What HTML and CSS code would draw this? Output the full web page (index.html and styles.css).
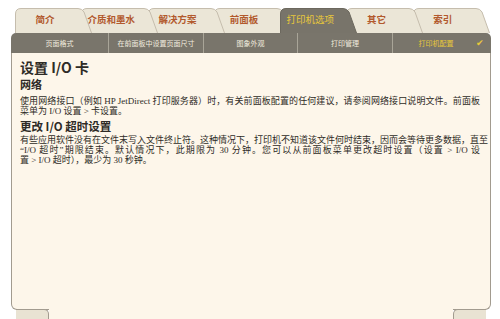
FILE: index.html
```html
<!DOCTYPE html>
<html lang="zh-CN">
<head>
<meta charset="utf-8">
<title>设置 I/O 卡</title>
<link rel="stylesheet" href="styles.css">
</head>
<body>
<div class="page">
  <nav class="tabs">
    <div class="tab z7"><svg class="tab-bg" viewBox="0 0 77 25"><path d="M0.5 25 V6 Q0.5 0.5 6 0.5 H63 Q67 0.5 69 4 L76.5 25"/></svg><span>简介</span></div>
    <div class="tab z6"><svg class="tab-bg" viewBox="0 0 77 25"><path d="M0.5 25 V6 Q0.5 0.5 6 0.5 H63 Q67 0.5 69 4 L76.5 25"/></svg><span>介质和墨水</span></div>
    <div class="tab z5"><svg class="tab-bg" viewBox="0 0 77 25"><path d="M0.5 25 V6 Q0.5 0.5 6 0.5 H63 Q67 0.5 69 4 L76.5 25"/></svg><span>解决方案</span></div>
    <div class="tab z4"><svg class="tab-bg" viewBox="0 0 77 25"><path d="M0.5 25 V6 Q0.5 0.5 6 0.5 H63 Q67 0.5 69 4 L76.5 25"/></svg><span>前面板</span></div>
    <div class="tab active"><svg class="tab-bg" viewBox="0 0 77 25"><path d="M0.5 25 V6 Q0.5 0.5 6 0.5 H63 Q67 0.5 69 4 L76.5 25"/></svg><span>打印机选项</span></div>
    <div class="tab z2"><svg class="tab-bg" viewBox="0 0 77 25"><path d="M0.5 25 V6 Q0.5 0.5 6 0.5 H63 Q67 0.5 69 4 L76.5 25"/></svg><span>其它</span></div>
    <div class="tab z1"><svg class="tab-bg" viewBox="0 0 77 25"><path d="M0.5 25 V6 Q0.5 0.5 6 0.5 H63 Q67 0.5 69 4 L76.5 25"/></svg><span>索引</span></div>
  </nav>
  <div class="subbar">
    <div class="sub">页面格式</div>
    <div class="sub">在前面板中设置页面尺寸</div>
    <div class="sub">图象外观</div>
    <div class="sub">打印管理</div>
    <div class="sub current"><span class="sub-label">打印机配置</span><span class="check">✔</span></div>
  </div>
  <main class="content">
    <h1 class="title">设置 I/O 卡</h1>
    <h2 class="subtitle">网络</h2>
    <p class="para">
      <span class="line">使用网络接口（例如 HP JetDirect 打印服务器）时，有关前面板配置的任何建议，请参阅网络接口说明文件。前面板</span>
      <span class="line last">菜单为 I/O 设置 &gt; 卡设置。</span>
    </p>
    <h2 class="subtitle big">更改 I/O 超时设置</h2>
    <p class="para second">
      <span class="line">有些应用软件没有在文件末写入文件终止符。这种情况下，打印机不知道该文件何时结束，因而会等待更多数据，直至</span>
      <span class="line">“I/O 超时”期限结束。默认情况下，此期限为 30 分钟。您可以从前面板菜单更改超时设置（设置 &gt; I/O 设</span>
      <span class="line last">置 &gt; I/O 超时），最少为 30 秒钟。</span>
    </p>
  </main>
  <div class="footer">
    <div class="cap cap-left"></div>
    <div class="mid"></div>
    <div class="cap cap-right"></div>
  </div>
</div>
</body>
</html>
```
FILE: styles.css
```css
html, body {
  margin: 0;
  padding: 0;
  background: #ffffff;
}
body {
  font-family: "Noto Sans CJK SC", "Noto Sans", sans-serif;
  width: 500px;
  height: 319px;
  overflow: hidden;
}
.tabs {
  display: flex;
  padding: 8px 0 0 15px;
  height: 25px;
}
.tab {
  position: relative;
  flex: none;
  width: 66.3px;
  height: 25px;
}
.tab-bg {
  position: absolute;
  left: 0;
  top: 0;
  width: 77px;
  height: 25px;
}
.tab-bg path {
  fill: #ebe6d7;
  stroke: #c5bdad;
  stroke-width: 1;
}
.tab span {
  position: relative;
  display: block;
  width: 60px;
  text-align: center;
  line-height: 23px;
  font-size: 9.5px;
  font-weight: bold;
  color: #b2592d;
  white-space: nowrap;
}
.z7 { z-index: 7; }
.z6 { z-index: 6; }
.z5 { z-index: 5; }
.z4 { z-index: 4; }
.z2 { z-index: 2; }
.z1 { z-index: 1; }
.tab.active { z-index: 9; }
.tab.active .tab-bg path {
  fill: #78746a;
  stroke: #6c685e;
}
.tab.active span {
  color: #e8c83a;
  font-weight: normal;
}
.subbar {
  position: relative;
  z-index: 10;
  margin-left: 11px;
  width: 480px;
  height: 20px;
  background: #79756b;
  border-radius: 5px 5px 0 0;
  display: grid;
  grid-template-columns: 97px 95px 94px 95px 1fr;
}
.sub {
  display: flex;
  align-items: center;
  justify-content: center;
  font-size: 7px;
  color: #f1ecdf;
  border-left: 1px solid #a9a598;
  white-space: nowrap;
}
.sub:first-child {
  border-left: none;
}
.sub.current {
  position: relative;
  color: #e8c83a;
}
.sub-label {
  padding-right: 12px;
}
.check {
  position: absolute;
  right: 7px;
  top: 4px;
  font-size: 9px;
  line-height: 11px;
  color: #e8c83a;
}
.content {
  box-sizing: border-box;
  margin-left: 11px;
  width: 480px;
  height: 257px;
  background: #fdf6ea;
  border-left: 1px solid #a29b8f;
  border-right: 1px solid #a29b8f;
  border-bottom: 1px solid #a29b8f;
  border-radius: 0 0 6px 6px;
  padding: 5px 10px 0 8px;
  color: #2e2b26;
}
.title {
  margin: 0;
  font-size: 14px;
  line-height: 18px;
  font-weight: bold;
}
.subtitle {
  margin: 1px 0 0;
  font-size: 11px;
  line-height: 14px;
  font-weight: bold;
}
.subtitle.big {
  margin-top: 3px;
  font-size: 11.5px;
}
.para {
  margin: 5px 0 0;
  font-family: "Liberation Serif", "Noto Sans CJK SC", serif;
  font-size: 9px;
  line-height: 10px;
}
.para.second {
  margin-top: 2px;
}
.line {
  display: block;
  text-align: justify;
  text-align-last: justify;
  white-space: nowrap;
}
.line.last {
  text-align-last: left;
}
.footer {
  display: flex;
  margin-left: 11px;
  width: 480px;
  height: 10px;
}
.cap {
  box-sizing: border-box;
  width: 33px;
  height: 11px;
  margin-top: -1px;
  background: #e9e3d3;
  border-top: 1px solid #a29b8f;
}
.cap-left {
  margin-left: 5px;
  border-right: 1px solid #a29b8f;
  border-top-right-radius: 5px;
}
.cap-right {
  margin-right: 5px;
  border-left: 1px solid #a29b8f;
  border-top-left-radius: 5px;
}
.mid {
  flex: 1;
  margin-top: -1px;
  height: 11px;
  background: #fdf6ea;
}
```
